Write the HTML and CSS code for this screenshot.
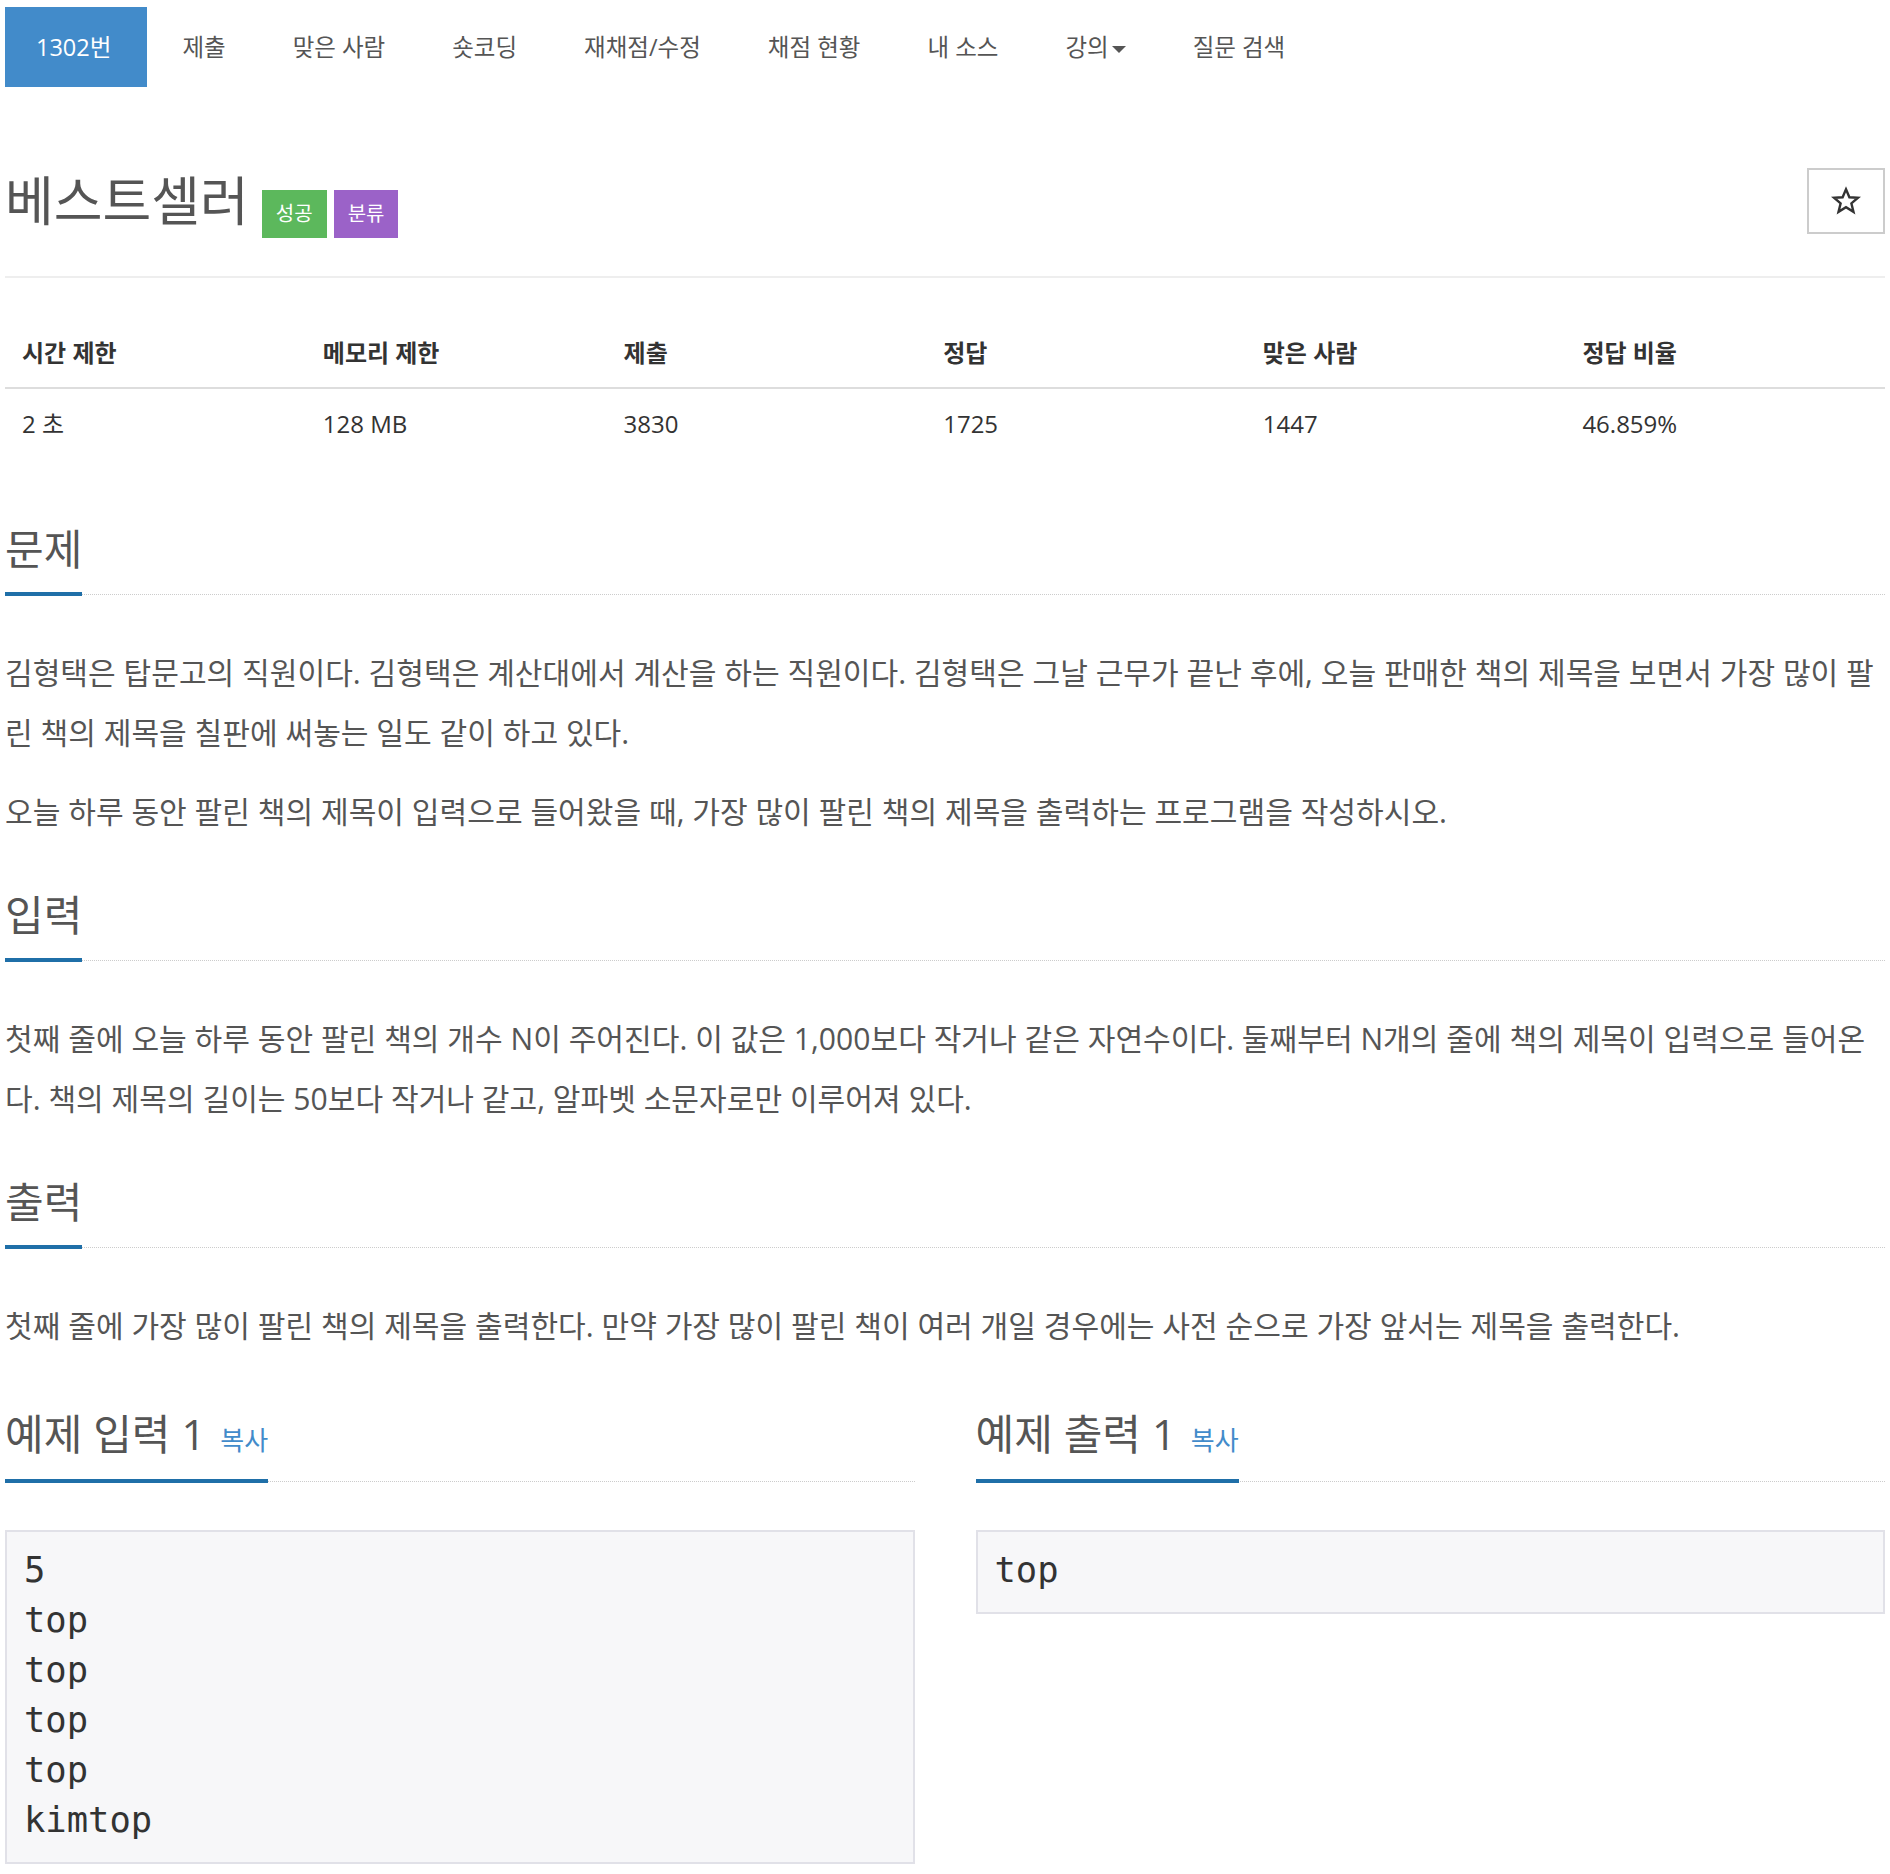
FILE: index.html
```html
<!DOCTYPE html>
<html lang="ko">
<head>
<meta charset="utf-8">
<title>1302번: 베스트셀러</title>
<link rel="stylesheet" href="styles.css">
</head>
<body>
<div class="container">
  <ul class="nav-tabs">
    <li class="active"><a>1302번</a></li>
    <li><a>제출</a></li>
    <li><a>맞은 사람</a></li>
    <li><a>숏코딩</a></li>
    <li><a>재채점/수정</a></li>
    <li><a>채점 현황</a></li>
    <li><a>내 소스</a></li>
    <li><a>강의<span class="caret"></span></a></li>
    <li><a>질문 검색</a></li>
  </ul>

  <div class="page-header">
    <h1 class="title">베스트셀러</h1>
    <span class="label label-success">성공</span>
    <span class="label label-purple">분류</span>
    <button class="star-btn" type="button" aria-label="즐겨찾기">
      <svg class="star-icon" viewBox="0 0 24 24" width="30" height="30" aria-hidden="true">
        <polygon points="12,2.6 14.7,9 21.6,9.4 16.3,13.9 18,20.7 12,17 6,20.7 7.7,13.9 2.4,9.4 9.3,9" fill="none" stroke="#333" stroke-width="1.9" stroke-linejoin="miter"/>
      </svg>
    </button>
  </div>

  <table class="info-table">
    <thead>
      <tr>
        <th class="w16">시간 제한</th>
        <th class="w16">메모리 제한</th>
        <th class="w17">제출</th>
        <th class="w17">정답</th>
        <th class="w17">맞은 사람</th>
        <th class="w17">정답 비율</th>
      </tr>
    </thead>
    <tbody>
      <tr>
        <td>2 초</td>
        <td>128 MB</td>
        <td>3830</td>
        <td>1725</td>
        <td>1447</td>
        <td>46.859%</td>
      </tr>
    </tbody>
  </table>

  <section class="section first">
    <div class="headline"><h2>문제</h2></div>
    <div class="problem-text">
      <p>김형택은 탑문고의 직원이다. 김형택은 계산대에서 계산을 하는 직원이다. 김형택은 그날 근무가 끝난 후에, 오늘 판매한 책의 제목을 보면서 가장 많이 팔린 책의 제목을 칠판에 써놓는 일도 같이 하고 있다.</p>
      <p>오늘 하루 동안 팔린 책의 제목이 입력으로 들어왔을 때, 가장 많이 팔린 책의 제목을 출력하는 프로그램을 작성하시오.</p>
    </div>
  </section>

  <section class="section">
    <div class="headline"><h2>입력</h2></div>
    <div class="problem-text">
      <p>첫째 줄에 오늘 하루 동안 팔린 책의 개수 N이 주어진다. 이 값은 1,000보다 작거나 같은 자연수이다. 둘째부터 N개의 줄에 책의 제목이 입력으로 들어온다. 책의 제목의 길이는 50보다 작거나 같고, 알파벳 소문자로만 이루어져 있다.</p>
    </div>
  </section>

  <section class="section">
    <div class="headline"><h2>출력</h2></div>
    <div class="problem-text">
      <p>첫째 줄에 가장 많이 팔린 책의 제목을 출력한다. 만약 가장 많이 팔린 책이 여러 개일 경우에는 사전 순으로 가장 앞서는 제목을 출력한다.</p>
    </div>
  </section>

  <div class="samples">
    <section class="sample">
      <div class="headline"><h2>예제 입력 1 <a class="copy">복사</a></h2></div>
      <pre class="sampledata">5
top
top
top
top
kimtop</pre>
    </section>
    <section class="sample">
      <div class="headline"><h2>예제 출력 1 <a class="copy">복사</a></h2></div>
      <pre class="sampledata">top</pre>
    </section>
  </div>
</div>
</body>
</html>
```

FILE: styles.css
```css
* { box-sizing: border-box; }

html, body {
  margin: 0;
  padding: 0;
  background: #fff;
}

body {
  font-family: "Open Sans", "Noto Sans CJK KR", sans-serif;
  color: #555;
}

.container {
  padding: 0 5px;
}

/* nav */
.nav-tabs {
  list-style: none;
  margin: 7px 0 0;
  padding: 0;
  display: flex;
}

.nav-tabs li {
  margin-right: 3px;
}

.nav-tabs a {
  display: block;
  font-size: 23.5px;
  line-height: 34px;
  padding: 23px 32px;
  color: #555;
}

.nav-tabs li.active a {
  background: #428bca;
  color: #fff;
  padding-left: 31px;
  padding-right: 36px;
}

.caret {
  display: inline-block;
  width: 0;
  height: 0;
  margin-left: 3px;
  vertical-align: middle;
  border-top: 7px solid #555;
  border-left: 7px solid transparent;
  border-right: 7px solid transparent;
}

/* header */
.page-header {
  display: flex;
  align-items: flex-start;
  margin-top: 84px;
  padding-bottom: 38px;
  border-bottom: 2px solid #eee;
}

.title {
  margin: 0 13px 0 0;
  font-size: 53px;
  line-height: 60px;
  font-weight: 400;
  color: #555;
}

.label {
  margin-top: 19px;
  height: 48px;
  line-height: 48px;
  padding: 0 14px;
  font-size: 20px;
  color: #fff;
  margin-right: 7px;
}

.label-success { background: #5cb85c; }
.label-purple { background: #9b62c8; }

.star-btn {
  margin-left: auto;
  margin-top: -3px;
  width: 78px;
  height: 66px;
  border: 2px solid #ccc;
  background: #fff;
  padding: 0;
  display: flex;
  align-items: center;
  justify-content: center;
}

.star-icon {
  display: block;
}

/* table */
.info-table {
  width: 100%;
  border-collapse: collapse;
  margin-top: 40px;
  color: #333;
  font-size: 24px;
}

.info-table th,
.info-table td {
  text-align: left;
  padding: 17px 17px;
  line-height: 35px;
}

.info-table th {
  font-weight: 700;
  border-bottom: 2px solid #ddd;
}

.w16 { width: 16%; }
.w17 { width: 17%; }

/* sections */
.section {
  margin-top: 50px;
}

.section.first {
  margin-top: 68px;
}

.headline {
  border-bottom: 1px dotted #ccc;
  margin-bottom: 48px;
}

.headline h2 {
  display: inline-block;
  margin: 0 0 -2px;
  font-size: 42px;
  line-height: 46px;
  font-weight: 400;
  color: #555;
  padding-bottom: 20px;
  border-bottom: 4px solid #1f6fa8;
}

.problem-text p {
  margin: 0;
  font-size: 30.1px;
  line-height: 60px;
  color: #555;
}

.problem-text p + p {
  margin-top: 19px;
}

/* samples */
.samples {
  display: grid;
  grid-template-columns: 1fr 1fr;
  column-gap: 61px;
  margin-top: 55px;
}

.sample .headline {
  margin-bottom: 48px;
}

.sample .headline h2 {
  padding-bottom: 16px;
}

.copy {
  font-size: 26px;
  color: #428bca;
  margin-left: 4px;
}

.sampledata {
  margin: 0;
  font-family: "DejaVu Sans Mono", monospace;
  font-size: 35.5px;
  line-height: 50px;
  color: #333;
  background: #f7f7f9;
  border: 2px solid #e1e1e8;
  padding: 13px 17px 17px;
}
```
